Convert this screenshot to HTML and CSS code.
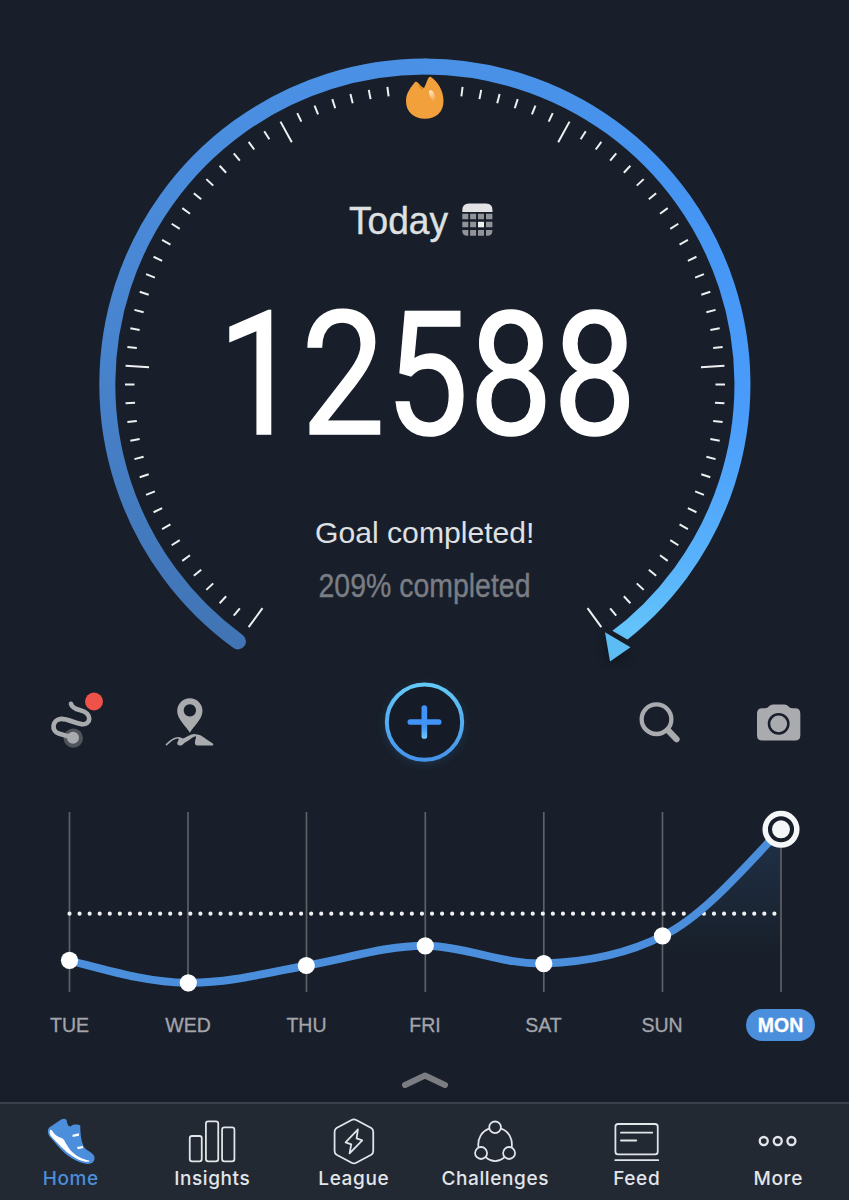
FILE: index.html
```html
<!DOCTYPE html>
<html lang="en">
<head>
<meta charset="utf-8">
<title>Steps</title>
<link rel="stylesheet" href="styles.css">
</head>
<body>
<div class="app">
  <svg class="gauge" width="849" height="670" viewBox="0 0 849 670">
    <defs>
      <linearGradient id="arcLeft" gradientUnits="userSpaceOnUse" x1="0" y1="60" x2="0" y2="650">
        <stop offset="0" stop-color="#4a91e6"/><stop offset=".4" stop-color="#4986d2"/><stop offset="1" stop-color="#4074b4"/>
      </linearGradient>
      <linearGradient id="arcRight" gradientUnits="userSpaceOnUse" x1="0" y1="60" x2="0" y2="650">
        <stop offset="0" stop-color="#4a91e6"/><stop offset=".2" stop-color="#4594f2"/><stop offset=".6" stop-color="#4a9cfb"/><stop offset=".85" stop-color="#58b2fb"/><stop offset="1" stop-color="#66c8f9"/>
      </linearGradient>
      <linearGradient id="shine" x1="0" y1="0" x2=".5" y2="1">
        <stop offset="0" stop-color="#fff5e2"/><stop offset="1" stop-color="#f2a03c"/>
      </linearGradient>
    </defs>
    <path class="arc" stroke="url(#arcLeft)" stroke-linecap="round" d="M237.9 641.4A318 318 0 0 1 425 66.500"/>
    <path class="arc" stroke="url(#arcRight)" d="M424.500 66.500A318 318 0 0 1 612 641.300"/>
    <path class="arrow-gap" d="M605 632.300L630.500 647.200L610 661.500Z"/>
    <path class="arrow" d="M605 632.300L630.500 647.200L610 661.500Z"/>
    <g class="ticks" id="ticks"></g>
    <path fill="#f2a03c" d="M415 82C411 87 406 93 406 101C406 112 414 118.700 425 118.700C436 118.700 443.500 112 443.500 101C443.500 90 437 81 430.500 76.800C428 75.800 426.500 84 424 88C421 88 418 80 415 82Z"/>
    <path fill="#d98a28" d="M417 84.500L424 88L422 90Z"/>
    <path fill="url(#shine)" d="M429 91C432 88 435 93 436.500 102C434 104 429 97 429 91Z"/>
    <text class="today" x="349" y="234" textLength="99" lengthAdjust="spacingAndGlyphs">Today</text>
    <g>
      <path fill="#e3e3e5" d="M462.300 212V210Q462.300 203.500 469 203.500H486Q492.500 203.500 492.500 210V212Z"/>
      <path fill="#909399" d="M462.300 213.700h6v5.500h-6zM470.100 213.700h6v5.500h-6zM478 213.700h6v5.500h-6zM486 213.700h6.400v5.500h-6.400zM462.300 221.800h6v5.500h-6zM470.100 221.800h6v5.500h-6zM486 221.800h6.400v5.500h-6.400zM462.300 230h6v5.700h-1q-5 0-5-5zM470.100 230h6v5.700h-6zM478 230h6v5.700h-6zM486 230h6.400v.7q0 5-5 5h-1.400z"/>
      <path fill="#f0f0f0" d="M478 221.800h6v5.500h-6z"/>
    </g>
    <text class="count" x="217.500" y="433.500" textLength="419" lengthAdjust="spacingAndGlyphs">12588</text>
    <text class="goal" x="315" y="543.300" textLength="219.500" lengthAdjust="spacingAndGlyphs">Goal completed!</text>
    <text class="percent" x="318.500" y="596.700" textLength="212" lengthAdjust="spacingAndGlyphs">209% completed</text>
  </svg>

  <div class="week-grid actions">
    <svg class="action" viewBox="0 7.5 240 240">
      <circle cx="130" cy="176" r="29" fill="#50545b"/>
      <path class="route" d="M123 73C126 84 134 88 151 92C189 102 183 138 155 134C132 130 112 117 93 118C66 120 63 155 86 162L126 174"/>
      <circle cx="129" cy="175" r="18" fill="#a9abae"/>
      <circle cx="192" cy="66" r="27" fill="#ef5248"/>
    </svg>
    <svg class="action" viewBox="355.5 7.5 240 240" fill="#a9abae">
      <path fill-rule="evenodd" d="M481 160C470 140 443 120 443 94A38 38 0 0 1 519 94C519 120 492 140 481 160ZM481 74a18.500 18.500 0 1 0 .1 0Z"/>
      <path d="M408 195C418 184 431 174 442 173Q451 171 460 177C473 174 484 162 497 164C510 163 523 173 532 180L550 192Q554 198 547 198H502C491 194 499 180 500 170C490 171 478 183 468 188C461 191 460 200 449 198C436 193 450 183 447 177C434 176 423 188 411 199Z"/>
    </svg>
    <svg class="action add" viewBox="46.5 37.5 240 240">
      <defs>
        <linearGradient id="ring" x1="0" y1="0" x2="0" y2="1"><stop offset="0" stop-color="#64c9f5"/><stop offset="1" stop-color="#4593ea"/></linearGradient>
        <linearGradient id="plus" x1="0" y1="0" x2="0" y2="1"><stop offset="0" stop-color="#4293f7"/><stop offset=".65" stop-color="#4293f7"/><stop offset="1" stop-color="#73cbfa"/></linearGradient>
      </defs>
      <circle cx="165" cy="158" r="113" fill="#151c27" stroke="url(#ring)" stroke-width="12"/>
      <path fill="url(#plus)" d="M156 149V115q0-8 8.500-8t8.500 8V149H208q8 0 8 8.500t-8 8.500H173V200q0 8-8.500 8t-8.500-8V166H122q-8 0-8-8.500t8-8.500Z"/>
    </svg>
    <svg class="action search" viewBox="7.500 7.500 240 240">
      <circle cx="111" cy="119" r="44.500" fill="none" stroke="#a9abae" stroke-width="13"/>
      <path d="M145 152L171 179" stroke="#a9abae" stroke-width="19" stroke-linecap="round"/>
    </svg>
    <svg class="action" viewBox="363 7.5 240 240">
      <path fill="#a9abae" d="M411 102Q411 86 427 86H435Q443 86 447 80Q451 75 459 75H493Q501 75 505 80Q509 86 517 86H525Q541 86 541 102V167Q541 183 525 183H427Q411 183 411 167Z"/>
      <circle cx="476" cy="133" r="29" fill="none" stroke="#181f2a" stroke-width="7.500"/>
    </svg>
  </div>

  <svg class="chart" width="849" height="210" viewBox="0 795 849 210">
    <defs>
      <linearGradient id="fade" x1="0" y1="0" x2="0" y2="1"><stop offset="0" stop-color="#4a90e2" stop-opacity=".16"/><stop offset="1" stop-color="#4a90e2" stop-opacity="0"/></linearGradient>
    </defs>
    <path fill="url(#fade)" d="M662.500 936C698 919 733 881 781 829V955H662.500Z"/>
    <path class="rule" d="M69.500 812V992M188 812V992M306.500 812V992M425.300 812V992M543.800 812V992M662.500 812V992M781 812V992"/>
    <path class="target" d="M69.500 913.700H777"/>
    <path class="trend" d="M69.500 960.500C110 971 150 983 188.300 982.700C228 983 267 973 306.500 965.500C346 959 385 945.500 425.200 945.700C465 946 504 965 544 963.500C586 962 625 955 662.500 936C698 919 733 881 781 829"/>
    <g fill="#fff">
      <circle cx="69.500" cy="960.300" r="8.600"/><circle cx="188.300" cy="982.800" r="8.600"/><circle cx="306.300" cy="965.500" r="8.600"/><circle cx="425.300" cy="945.800" r="8.600"/><circle cx="543.800" cy="963.600" r="8.600"/><circle cx="662.500" cy="935.800" r="8.600"/>
    </g>
    <circle class="today-ring" cx="781" cy="829.300" r="15.800"/>
    <circle cx="781" cy="829.300" r="9" fill="#f5f6f8"/>
  </svg>

  <div class="week-grid days">
    <span>TUE</span><span>WED</span><span>THU</span><span>FRI</span><span>SAT</span><span>SUN</span><span class="selected">MON</span>
  </div>

  <div class="handle">
    <svg width="50" height="22" viewBox="0 0 50 22"><path d="M5 16L25 6.500L45 16" fill="none" stroke="#7b7d82" stroke-width="6" stroke-linecap="round" stroke-linejoin="round"/></svg>
  </div>

  <nav class="tabs">
    <a class="tab active">
      <svg class="tab-icon" viewBox="122.250 168 180 156">
        <path fill="#4a8edc" d="M184 178Q193 173 199 180C201 189 202 201 212 199C217 191 233 194 240 196C240 220 243 247 251 260C258 273 278 276 282 289C286 306 274 313 260 312C225 307 199 287 176 262L150 232C142 224 140 208 148 202Z"/>
        <path fill="#fff" d="M148 215Q149 206 155 211C161 222 170 230 181 233C192 235 193 244 200 255C214 280 237 296 268 302Q267 307 255 305C225 299 204 281 184 262L155 232Q148 225 148 215ZM217 224L236 220V227L217 231ZM230 261L247 258L249 264L233 268Z"/>
      </svg>
      <span>Home</span>
    </a>
    <a class="tab">
      <svg class="tab-icon line" viewBox="546.750 168 180 156"><rect x="570" y="228" width="36" height="76" rx="7"/><rect x="618.500" y="184" width="37" height="120" rx="7"/><rect x="667" y="202" width="37" height="102" rx="7"/></svg>
      <span>Insights</span>
    </a>
    <a class="tab">
      <svg class="tab-icon line" viewBox="971.250 168 180 156"><path d="M1054 180Q1061 176 1068 180L1113 204Q1119 208 1119 215V273Q1119 280 1113 284L1068 308Q1061 312 1054 308L1009 284Q1003 280 1003 273V215Q1003 208 1009 204Z"/><path d="M1073 208L1036 247L1053 253L1048 280L1086 241L1069 235Z"/></svg>
      <span>League</span>
    </a>
    <a class="tab">
      <svg class="tab-icon line" viewBox="135.750 78 180 156"><circle cx="226" cy="112" r="17.500"/><circle cx="184" cy="189" r="18"/><circle cx="268" cy="189" r="18"/><path d="M208 116C186 124 173 145 176 171M244 116C267 124 279 145 276 171M198 202Q226 225 254 202"/></svg>
      <span>Challenges</span>
    </a>
    <a class="tab">
      <svg class="tab-icon line" viewBox="560.250 78 180 156"><rect x="585.500" y="102" width="127" height="91" rx="8"/><path d="M585 210.500H714M602 128H696M602 151.500H648"/></svg>
      <span>Feed</span>
    </a>
    <a class="tab">
      <svg class="tab-icon dots" viewBox="984.750 78 180 156"><circle cx="1032" cy="153" r="12"/><circle cx="1074" cy="153" r="12"/><circle cx="1115" cy="153" r="12"/></svg>
      <span>More</span>
    </a>
  </nav>
</div>
<script src="gauge.js"></script>
</body>
</html>
```
FILE: gauge.js
```js
// Scale marks: 80 steps over 288 degrees, a long mark every 16 steps,
// with room left at the top for the goal flame.
var group = document.getElementById('ticks');
for (var i = 0; i <= 80; i++) {
  if (i > 38 && i < 42) continue;
  var major = i % 16 === 0;
  var line = document.createElementNS('http://www.w3.org/2000/svg', 'line');
  line.setAttribute('x1', 425);
  line.setAttribute('x2', 425);
  line.setAttribute('y1', 384.5 + (major ? 276.5 : 290.5));
  line.setAttribute('y2', 384.5 + 300);
  line.setAttribute('transform', 'rotate(' + (36 + i * 3.6) + ' 425 384.5)');
  group.appendChild(line);
}
```
FILE: styles.css
```css
* { box-sizing: border-box; }
body {
  margin: 0;
  background: #181f2a;
  font-family: "Liberation Sans", Arial, sans-serif;
}
.app {
  display: flex;
  flex-direction: column;
  width: 849px;
  height: 1200px;
  overflow: hidden;
}
.app > * { flex-shrink: 0; }
svg { display: block; }

.arc { fill: none; stroke-width: 16; }
.arrow { fill: #5dbdf2; filter: drop-shadow(0 3px 6px rgba(0, 0, 0, .4)); }
.arrow-gap { fill: #181f2a; stroke: #181f2a; stroke-width: 10; }
.ticks { stroke: #eef0f2; stroke-width: 2; }
.today { font-size: 39px; fill: #dfe0e2; stroke: #dfe0e2; stroke-width: .4; }
.count {
  font-family: Roboto, "Liberation Sans", sans-serif;
  font-size: 173px;
  fill: #fff;
  stroke: #fff;
  stroke-width: 1.5;
}
.goal { font-size: 30px; fill: #dfe0e3; }
.percent { font-size: 34px; fill: #7a7d84; stroke: #7a7d84; stroke-width: .4; }

.week-grid {
  display: grid;
  grid-template-columns: repeat(7, 118.5px);
  padding-left: 10.25px;
  justify-items: center;
  align-items: center;
}
.actions { height: 104px; }
.action { width: 80px; height: 80px; overflow: visible; }
.route {
  fill: none;
  stroke: #a9abae;
  stroke-width: 14;
  stroke-linecap: round;
}
.add {
  grid-column: 4;
  filter: drop-shadow(0 2px 4px rgba(50, 130, 210, .2));
}
.search { grid-column: 6; }

.chart { margin-top: 21px; }
.rule { stroke: #5d6065; stroke-width: 1.7; }
.target {
  stroke: #f0f1f3;
  stroke-width: 4.2;
  stroke-linecap: round;
  stroke-dasharray: 0 10.07;
}
.trend { fill: none; stroke: #4a8edc; stroke-width: 8; }
.today-ring { fill: #181f2a; stroke: #f5f6f8; stroke-width: 5.5; }

.days {
  height: 40px;
  font-size: 19.5px;
  color: #a3a5aa;
  -webkit-text-stroke: .3px;
}
.selected {
  width: 69px;
  height: 32px;
  border-radius: 16px;
  background: #4a8edc;
  color: #fff;
  font-weight: bold;
  line-height: 32px;
  text-align: center;
}
.handle {
  display: flex;
  justify-content: center;
  align-items: center;
  height: 57px;
  padding-top: 12px;
}

.tabs {
  display: grid;
  grid-template-columns: repeat(6, 1fr);
  height: 98px;
  border-top: 2px solid #3b414b;
  background: #232933;
}
.tab {
  display: flex;
  flex-direction: column;
  align-items: center;
  padding-top: 12px;
  color: #e2e5e9;
  font: 450 19px/22px Inter, sans-serif;
  letter-spacing: .6px;
}
.active { color: #4a8edc; }
.tab-icon { width: 60px; height: 52px; }
.line {
  fill: none;
  stroke: #e2e5e9;
  stroke-width: 5.3;
  stroke-linecap: round;
  stroke-linejoin: round;
}
.dots { fill: none; stroke: #e2e5e9; stroke-width: 7; }
```
